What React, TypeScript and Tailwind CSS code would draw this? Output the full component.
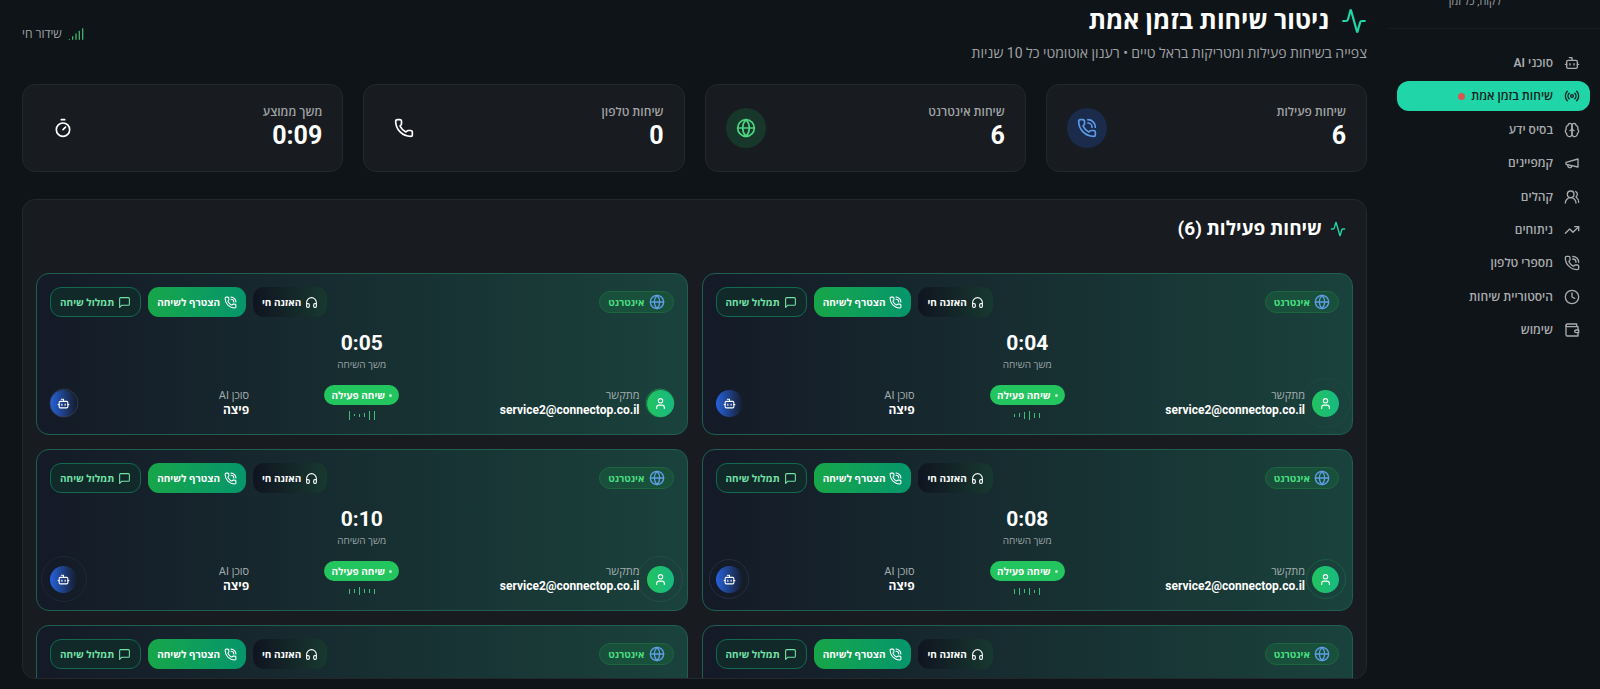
import type { ComponentType, ReactNode } from "react";
import {
  Activity,
  Bot,
  Clock,
  Globe,
  Headphones,
  Phone,
  PhoneCall,
  Radio,
  Signal,
  Timer,
  TrendingUp,
  User,
  UsersRound,
} from "lucide-react";

type IconType = ComponentType<{ className?: string }>;

function makeIcon(children: ReactNode): IconType {
  return function LineIcon({ className }) {
    return (
      <svg
        viewBox="0 0 24 24"
        fill="none"
        stroke="currentColor"
        strokeWidth="2"
        strokeLinecap="round"
        strokeLinejoin="round"
        className={className}
        aria-hidden="true"
      >
        {children}
      </svg>
    );
  };
}

const Brain = makeIcon(
  <>
    <path d="M12 5a3 3 0 1 0-5.997.125 4 4 0 0 0-2.526 5.77 4 4 0 0 0 .556 6.588A4 4 0 1 0 12 18Z" />
    <path d="M12 5a3 3 0 1 1 5.997.125 4 4 0 0 1 2.526 5.77 4 4 0 0 1-.556 6.588A4 4 0 1 1 12 18Z" />
    <path d="M15 13a4.5 4.5 0 0 1-3-4 4.5 4.5 0 0 1-3 4" />
  </>,
);

const Megaphone = makeIcon(
  <>
    <path d="m3 11 18-5v12L3 14v-3z" />
    <path d="M11.6 16.8a3 3 0 1 1-5.8-1.6" />
  </>,
);

const Wallet = makeIcon(
  <>
    <path d="M21 12V7H5a2 2 0 0 1 0-4h14v4" />
    <path d="M3 5v14a2 2 0 0 0 2 2h16v-5" />
    <path d="M18 12a2 2 0 0 0 0 4h4v-4Z" />
  </>,
);

const Message = makeIcon(
  <path d="M21 15a2 2 0 0 1-2 2H7l-4 4V5a2 2 0 0 1 2-2h14a2 2 0 0 1 2 2z" />,
);

const navItems: { label: string; icon: IconType; active?: boolean }[] = [
  { label: "סוכני AI", icon: Bot },
  { label: "שיחות בזמן אמת", icon: Radio, active: true },
  { label: "בסיס ידע", icon: Brain },
  { label: "קמפיינים", icon: Megaphone },
  { label: "קהלים", icon: UsersRound },
  { label: "ניתוחים", icon: TrendingUp },
  { label: "מספרי טלפון", icon: PhoneCall },
  { label: "היסטוריית שיחות", icon: Clock },
  { label: "שימוש", icon: Wallet },
];

const stats: { label: string; value: string; icon: IconType; tone: string }[] = [
  { label: "שיחות פעילות", value: "6", icon: PhoneCall, tone: "bg-[#1a2b4b] text-[#5c9bea]" },
  { label: "שיחות אינטרנט", value: "6", icon: Globe, tone: "bg-[#17372a] text-[#4fd683]" },
  { label: "שיחות טלפון", value: "0", icon: Phone, tone: "text-white" },
  { label: "משך ממוצע", value: "0:09", icon: Timer, tone: "text-white" },
];

type Call = { time: string; bars: number[]; callerRing: string; agentRing: string };

const calls: Call[] = [
  { time: "0:04", bars: [3, 4, 7, 9, 5, 5], callerRing: "size-[50px] border-white/3", agentRing: "size-[27px] border-transparent" },
  { time: "0:05", bars: [9, 2, 3, 4, 9, 9], callerRing: "size-[29px] border-[#22c55e]/50", agentRing: "size-[29px] border-[#334155]/80" },
  { time: "0:08", bars: [5, 7, 4, 7, 3, 7], callerRing: "size-[40px] border-[#22c55e]/20", agentRing: "size-[40px] border-[#334155]/50" },
  { time: "0:10", bars: [5, 4, 8, 4, 4, 5], callerRing: "size-[46px] border-white/6", agentRing: "size-[46px] border-[#334155]/30" },
  { time: "0:12", bars: [4, 6, 8, 3, 5, 7], callerRing: "size-[40px] border-white/5", agentRing: "size-[40px] border-[#334155]/40" },
  { time: "0:15", bars: [6, 3, 7, 5, 8, 4], callerRing: "size-[40px] border-white/5", agentRing: "size-[40px] border-[#334155]/40" },
];

function Avatar({ icon: Icon, tone, ring }: { icon: IconType; tone: string; ring: string }) {
  return (
    <span className={`relative flex size-[27px] shrink-0 items-center justify-center rounded-full ${tone}`}>
      <span className={`absolute top-1/2 left-1/2 -translate-x-1/2 -translate-y-1/2 rounded-full border ${ring}`} />
      <Icon className="size-[13px] text-white" />
    </span>
  );
}

function CallCard({ call }: { call: Call }) {
  return (
    <article className="rounded-[13px] border border-[#1f5f52] bg-linear-to-l from-[#1a423c] via-[#172e31] to-[#141a27] p-[13px]">
      <div className="flex items-center justify-between">
        <span className="flex h-[22px] items-center gap-1 rounded-full border border-[#1d6440] bg-[#19503b] px-2 text-[10px] font-bold text-[#4ade80]">
          <Globe className="size-4 text-[#5e9fe6]" />
          אינטרנט
        </span>
        <div className="flex items-center gap-[7px]">
          <button
            type="button"
            className="flex h-[30px] items-center gap-1 rounded-[11px] bg-linear-to-l from-[#17392f] to-[#0f1420] px-[9px] text-[10px] font-bold text-white"
          >
            <Headphones className="size-[13px]" />
            האזנה חי
          </button>
          <button
            type="button"
            className="flex h-[30px] items-center gap-1 rounded-[11px] bg-linear-to-l from-[#05966b] to-[#17a648] px-[9px] text-[10px] font-bold text-white"
          >
            <PhoneCall className="size-[13px]" />
            הצטרף לשיחה
          </button>
          <button
            type="button"
            className="flex h-[30px] items-center gap-1 rounded-[11px] border border-[#11694f] bg-[#12292a] px-[9px] text-[10px] font-bold text-[#72e2a6]"
          >
            <Message className="size-[13px]" />
            תמלול שיחה
          </button>
        </div>
      </div>

      <div className="mt-3 text-center">
        <p className="text-[21px] leading-7 font-bold text-white">{call.time}</p>
        <p className="text-[10px] leading-4 font-medium text-[#9aa3a6]">משך השיחה</p>
      </div>

      <div className="mt-3 grid grid-cols-3 items-center gap-[13px]">
        <div className="flex items-center gap-[7px]">
          <Avatar icon={User} tone="bg-linear-to-l from-[#18b981] to-[#22c35f]" ring={call.callerRing} />
          <div>
            <p className="text-[11px] leading-[14px] text-[#a3aeae]">מתקשר</p>
            <p className="text-[12px] leading-[15px] font-bold text-white">service2@connectop.co.il</p>
          </div>
        </div>
        <div className="flex flex-col items-center gap-1">
          <span className="flex h-5 items-center gap-1 rounded-full bg-[#22c55e] px-[7px] text-[10px] font-bold whitespace-nowrap text-white">
            <span className="size-[3px] rounded-full bg-white/70" />
            שיחה פעילה
          </span>
          <div dir="ltr" className="flex h-3 items-center gap-1">
            {call.bars.map((height, index) => (
              <span key={index} className="w-px bg-[#3fbf77]" style={{ height }} />
            ))}
          </div>
        </div>
        <div className="flex items-center justify-between">
          <div>
            <p className="text-[11px] leading-[14px] text-[#a3aeae]">סוכן AI</p>
            <p className="text-[12px] leading-[15px] font-bold text-white">פיצה</p>
          </div>
          <Avatar icon={Bot} tone="bg-linear-to-r from-[#2563e0] to-[#141c2e]" ring={call.agentRing} />
        </div>
      </div>
    </article>
  );
}

export default function App() {
  return (
    <div
      dir="rtl"
      lang="he"
      className="flex h-screen overflow-hidden bg-[#0f1418] font-['Roboto','Open_Sans',sans-serif] text-white"
    >
      <aside className="w-[212px] shrink-0">
        <div className="flex h-[29px] items-start border-b border-[#171c20] pr-[99px]">
          <p className="-mt-[6px] text-[11px] leading-4 text-[#9b9fa3]">לקוח, כל זמן</p>
        </div>
        <nav className="mt-[19px] flex h-[297px] flex-col justify-between pr-[10px] pl-[9px]">
          {navItems.map(({ label, icon: Icon, active }) => (
            <a
              key={label}
              href="#"
              aria-current={active ? "page" : undefined}
              className={`flex h-[30px] items-center gap-[11px] rounded-xl px-[10px] text-[12px] font-semibold ${
                active ? "bg-[#20d5a7] text-[#0f1f1e]" : "text-[#a9acaf]"
              }`}
            >
              <Icon className="size-4" />
              <span className="flex items-center gap-1.5">
                {label}
                {active && <span className="size-[7px] rounded-full bg-[#d9564f]" />}
              </span>
            </a>
          ))}
        </nav>
      </aside>

      <main className="flex min-w-0 flex-1 flex-col pt-[5px] pr-[21px] pb-[10px] pl-[22px]">
        <header className="mb-[21px] flex shrink-0 items-center justify-between">
          <div>
            <h1 className="flex items-center gap-3 text-[25px] leading-8 font-bold">
              <Activity className="size-[26px] text-[#20d5a7]" />
              ניטור שיחות בזמן אמת
            </h1>
            <p className="mt-1.5 text-[14px] leading-5 text-[#a0a3a6]">
              צפייה בשיחות פעילות ומטריקות בראל טיים • רענון אוטומטי כל 10 שניות
            </p>
          </div>
          <div className="flex items-center gap-1.5 text-[12px] font-medium text-[#a0a3a6]">
            <Signal className="size-4 text-[#3fae68]" />
            שידור חי
          </div>
        </header>

        <section className="mb-[27px] grid shrink-0 grid-cols-4 gap-5">
          {stats.map(({ label, value, icon: Icon, tone }) => (
            <div
              key={label}
              className="flex h-[88px] items-center justify-between rounded-[13px] border border-[#24282c] bg-[#181b1f] px-5"
            >
              <div>
                <p className="text-[12px] leading-4 font-semibold text-[#a0a3a6]">{label}</p>
                <p className="text-[25px] leading-8 font-bold">{value}</p>
              </div>
              <span className={`flex size-10 items-center justify-center rounded-full ${tone}`}>
                <Icon className="size-5" />
              </span>
            </div>
          ))}
        </section>

        <section className="min-h-0 flex-1 overflow-hidden rounded-[13px] border border-[#24282c] bg-[#181b1f]">
          <h2 className="flex items-center gap-2 px-5 pt-[15px] pb-[30px] text-[19px] leading-7 font-bold">
            <Activity className="size-4 text-[#20d5a7]" />
            שיחות פעילות (6)
          </h2>
          <div className="grid grid-cols-2 gap-[14px] px-[13px] pb-[13px]">
            {calls.map((call) => (
              <CallCard key={call.time} call={call} />
            ))}
          </div>
        </section>
      </main>
    </div>
  );
}
